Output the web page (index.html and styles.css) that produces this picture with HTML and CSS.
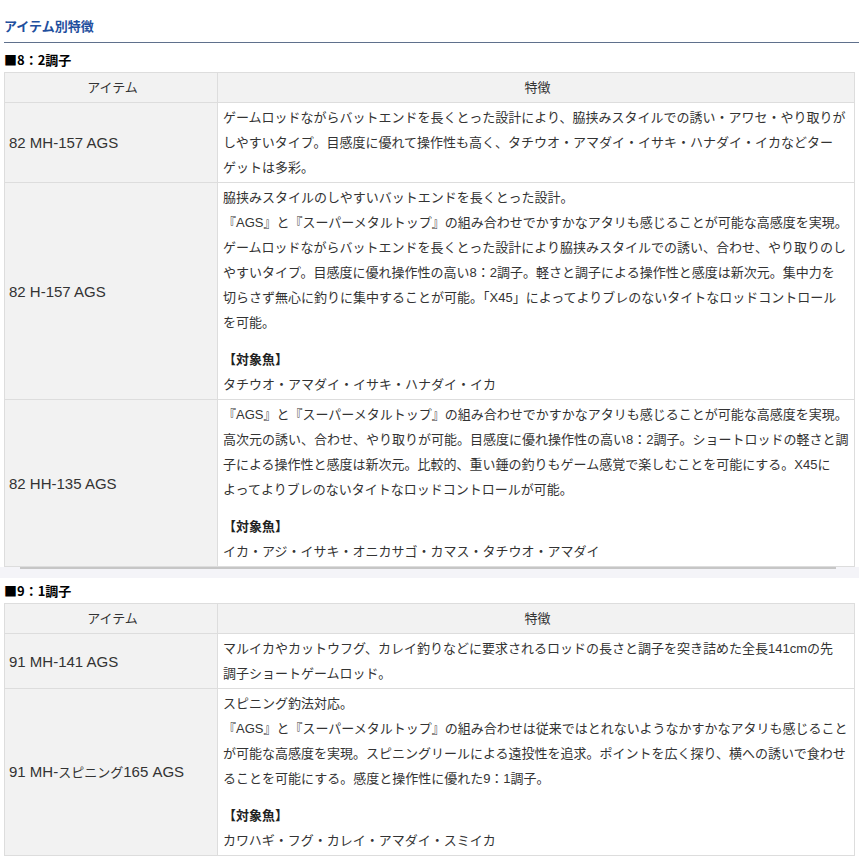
FILE: index.html
```html
<!DOCTYPE html>
<html lang="ja">
<head>
  <meta charset="UTF-8" />
  <meta name="viewport" content="width=device-width, initial-scale=1.0"/>
  <title>アイテム別特徴</title>
  <link rel="stylesheet" href="styles.css">
</head>
<body>
  <div class="container">
    <h2 class="heading">アイテム別特徴</h2>

    <h3 class="sub-heading">■8：2調子</h3>
    <table class="spec-table">
      <tr>
        <th class="col-item">アイテム</th>
        <th>特徴</th>
      </tr>
      <tr>
        <td class="col-item">82 MH-157 AGS</td>
        <td>ゲームロッドながらバットエンドを長くとった設計により、脇挟みスタイルでの誘い・アワセ・やり取りが<br>しやすいタイプ。目感度に優れて操作性も高く、タチウオ・アマダイ・イサキ・ハナダイ・イカなどター<br>ゲットは多彩。</td>
      </tr>
      <tr>
        <td class="col-item">82 H-157 AGS</td>
        <td>
          <p>脇挟みスタイルのしやすいバットエンドを長くとった設計。<br>『AGS』と『スーパーメタルトップ』の組み合わせでかすかなアタリも感じることが可能な高感度を実現。<br>ゲームロッドながらバットエンドを長くとった設計により脇挟みスタイルでの誘い、合わせ、やり取りのし<br>やすいタイプ。目感度に優れ操作性の高い8：2調子。軽さと調子による操作性と感度は新次元。集中力を<br>切らさず無心に釣りに集中することが可能。「X45」によってよりブレのないタイトなロッドコントロール<br>を可能。</p>
          <p class="target"><strong>【対象魚】</strong><br>タチウオ・アマダイ・イサキ・ハナダイ・イカ</p>
        </td>
      </tr>
      <tr>
        <td class="col-item">82 HH-135 AGS</td>
        <td>
          <p>『AGS』と『スーパーメタルトップ』の組み合わせでかすかなアタリも感じることが可能な高感度を実現。<br>高次元の誘い、合わせ、やり取りが可能。目感度に優れ操作性の高い8：2調子。ショートロッドの軽さと調<br>子による操作性と感度は新次元。比較的、重い錘の釣りもゲーム感覚で楽しむことを可能にする。X45に<br>よってよりブレのないタイトなロッドコントロールが可能。</p>
          <p class="target"><strong>【対象魚】</strong><br>イカ・アジ・イサキ・オニカサゴ・カマス・タチウオ・アマダイ</p>
        </td>
      </tr>
    </table>
    <div class="scroll-bar"><div class="scroll-thumb"></div></div>

    <h3 class="sub-heading">■9：1調子</h3>
    <table class="spec-table">
      <tr>
        <th class="col-item">アイテム</th>
        <th>特徴</th>
      </tr>
      <tr>
        <td class="col-item">91 MH-141 AGS</td>
        <td>マルイカやカットウフグ、カレイ釣りなどに要求されるロッドの長さと調子を突き詰めた全長141cmの先<br>調子ショートゲームロッド。</td>
      </tr>
      <tr>
        <td class="col-item">91 MH-<span class="ja">スピニング</span>165 AGS</td>
        <td>
          <p>スピニング釣法対応。<br>『AGS』と『スーパーメタルトップ』の組み合わせは従来ではとれないようなかすかなアタリも感じること<br>が可能な高感度を実現。スピニングリールによる遠投性を追求。ポイントを広く探り、横への誘いで食わせ<br>ることを可能にする。感度と操作性に優れた9：1調子。</p>
          <p class="target"><strong>【対象魚】</strong><br>カワハギ・フグ・カレイ・アマダイ・スミイカ</p>
        </td>
      </tr>
    </table>
  </div>
</body>
</html>
```

FILE: styles.css
```css
* { box-sizing: border-box; margin: 0; padding: 0; }

body {
  font-family: 'Liberation Sans', 'Noto Sans CJK JP', sans-serif;
  background-color: #fff;
  color: #333;
  font-size: 13px;
}

.container {
  padding: 0 4px;
}

.heading {
  margin-top: 16px;
  padding-bottom: 6px;
  font-family: 'Noto Sans CJK JP', sans-serif;
  font-size: 13px;
  line-height: 20px;
  font-weight: bold;
  color: #1f4f9e;
  border-bottom: 1px solid #5f708c;
  margin-right: -4px;
}

.sub-heading {
  margin-top: 7px;
  margin-bottom: 2px;
  font-family: 'Noto Sans CJK JP', sans-serif;
  font-size: 13px;
  line-height: 20px;
  font-weight: bold;
  color: #000;
}

.spec-table {
  width: 851px;
  border-collapse: collapse;
  line-height: 25px;
}

.spec-table th,
.spec-table td {
  border: 1px solid #ddd;
  padding: 2px 2px 2px 5px;
  vertical-align: middle;
  text-align: left;
  white-space: nowrap;
}

.spec-table th {
  background-color: #f2f2f2;
  font-weight: normal;
  text-align: center;
}

.spec-table .col-item {
  width: 213px;
  padding-left: 4px;
  background-color: #f2f2f2;
}

.spec-table td.col-item {
  font-size: 15px;
}

.spec-table .ja {
  font-size: 13px;
}

.spec-table th.col-item {
  padding-left: 5px;
}

.spec-table .target {
  margin-top: 12px;
}

.spec-table strong {
  color: #222;
}

.scroll-bar {
  height: 11px;
  margin: 0 -4px 0 -4px;
  background-color: #f4f4f8;
  padding: 0 23px 0 20px;
}

.scroll-thumb {
  height: 2px;
  background-color: #c6c6c6;
}

.scroll-bar + .sub-heading {
  margin-top: 3px;
}
```
